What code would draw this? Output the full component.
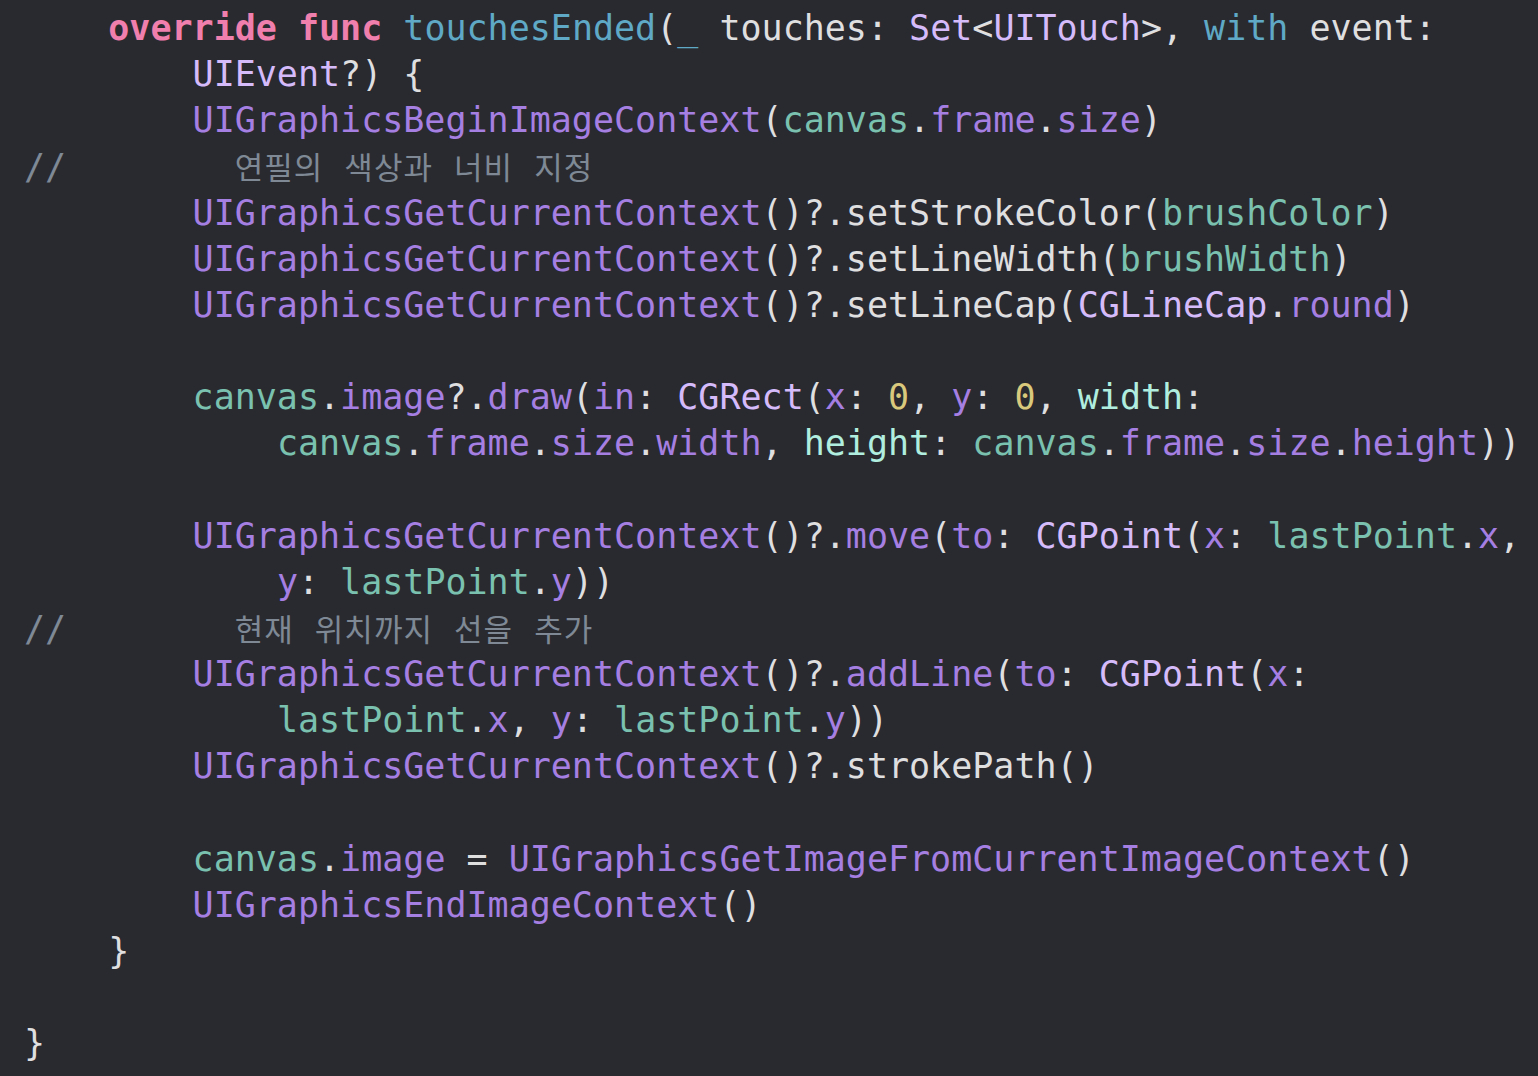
const K = {
  kw: "font-bold text-[#F07FAD]",
  decl: "text-[#5FA9C6]",
  type: "text-[#D5BBFA]",
  fn: "text-[#A67FE3]",
  vr: "text-[#7AC1AF]",
  lab: "text-[#B0EEDF]",
  num: "text-[#D9C97C]",
  cmt: "text-[#7E8995]",
};

type Tok = string | [string, string];

const ctx: Tok[] = [["UIGraphicsGetCurrentContext", K.fn], "()?."];

const lines: Tok[][] = [
  [
    "    ",
    ["override", K.kw],
    " ",
    ["func", K.kw],
    " ",
    ["touchesEnded", K.decl],
    "(",
    ["_", K.decl],
    " touches: ",
    ["Set", K.type],
    "<",
    ["UITouch", K.type],
    ">, ",
    ["with", K.decl],
    " event:",
  ],
  ["        ", ["UIEvent", K.type], "?) {"],
  [
    "        ",
    ["UIGraphicsBeginImageContext", K.fn],
    "(",
    ["canvas", K.vr],
    ".",
    ["frame", K.fn],
    ".",
    ["size", K.fn],
    ")",
  ],
  ["__c1"],
  ["        ", ...ctx, "setStrokeColor(", ["brushColor", K.vr], ")"],
  ["        ", ...ctx, "setLineWidth(", ["brushWidth", K.vr], ")"],
  ["        ", ...ctx, "setLineCap(", ["CGLineCap", K.type], ".", ["round", K.fn], ")"],
  [],
  [
    "        ",
    ["canvas", K.vr],
    ".",
    ["image", K.fn],
    "?.",
    ["draw", K.fn],
    "(",
    ["in", K.fn],
    ": ",
    ["CGRect", K.type],
    "(",
    ["x", K.fn],
    ": ",
    ["0", K.num],
    ", ",
    ["y", K.fn],
    ": ",
    ["0", K.num],
    ", ",
    ["width", K.lab],
    ":",
  ],
  [
    "            ",
    ["canvas", K.vr],
    ".",
    ["frame", K.fn],
    ".",
    ["size", K.fn],
    ".",
    ["width", K.fn],
    ", ",
    ["height", K.lab],
    ": ",
    ["canvas", K.vr],
    ".",
    ["frame", K.fn],
    ".",
    ["size", K.fn],
    ".",
    ["height", K.fn],
    "))",
  ],
  [],
  [
    "        ",
    ...ctx,
    ["move", K.fn],
    "(",
    ["to", K.fn],
    ": ",
    ["CGPoint", K.type],
    "(",
    ["x", K.fn],
    ": ",
    ["lastPoint", K.vr],
    ".",
    ["x", K.fn],
    ",",
  ],
  ["            ", ["y", K.fn], ": ", ["lastPoint", K.vr], ".", ["y", K.fn], "))"],
  ["__c2"],
  [
    "        ",
    ...ctx,
    ["addLine", K.fn],
    "(",
    ["to", K.fn],
    ": ",
    ["CGPoint", K.type],
    "(",
    ["x", K.fn],
    ":",
  ],
  [
    "            ",
    ["lastPoint", K.vr],
    ".",
    ["x", K.fn],
    ", ",
    ["y", K.fn],
    ": ",
    ["lastPoint", K.vr],
    ".",
    ["y", K.fn],
    "))",
  ],
  ["        ", ...ctx, "strokePath()"],
  [],
  [
    "        ",
    ["canvas", K.vr],
    ".",
    ["image", K.fn],
    " = ",
    ["UIGraphicsGetImageFromCurrentImageContext", K.fn],
    "()",
  ],
  ["        ", ["UIGraphicsEndImageContext", K.fn], "()"],
  ["    }"],
  [],
  ["}"],
];

function Comment({ words }: { words: string[] }) {
  return (
    <span className="text-[#7E8995]">
      {"//        "}
      {words.map((w, i) => (
        <span key={i}>
          {i > 0 && " "}
          <span className="font-['Noto_Sans_CJK_KR',sans-serif] text-[31px] tracking-[1px]">{w}</span>
        </span>
      ))}
    </span>
  );
}

export default function App() {
  return (
    <div className="min-h-screen w-full overflow-hidden bg-[#292A30] pl-[24px] pt-[5px] font-['DejaVu_Sans_Mono',monospace] text-[35px] leading-[46.15px] text-[#DFDFE0] whitespace-pre">
      {lines.map((line, i) => (
        <div key={i} className="h-[46.15px]">
          {line[0] === "__c1" ? (
            <Comment words={["연필의", "색상과", "너비", "지정"]} />
          ) : line[0] === "__c2" ? (
            <Comment words={["현재", "위치까지", "선을", "추가"]} />
          ) : (
            line.map((tok, j) =>
              typeof tok === "string" ? (
                <span key={j}>{tok}</span>
              ) : (
                <span key={j} className={tok[1]}>
                  {tok[0]}
                </span>
              )
            )
          )}
        </div>
      ))}
    </div>
  );
}
